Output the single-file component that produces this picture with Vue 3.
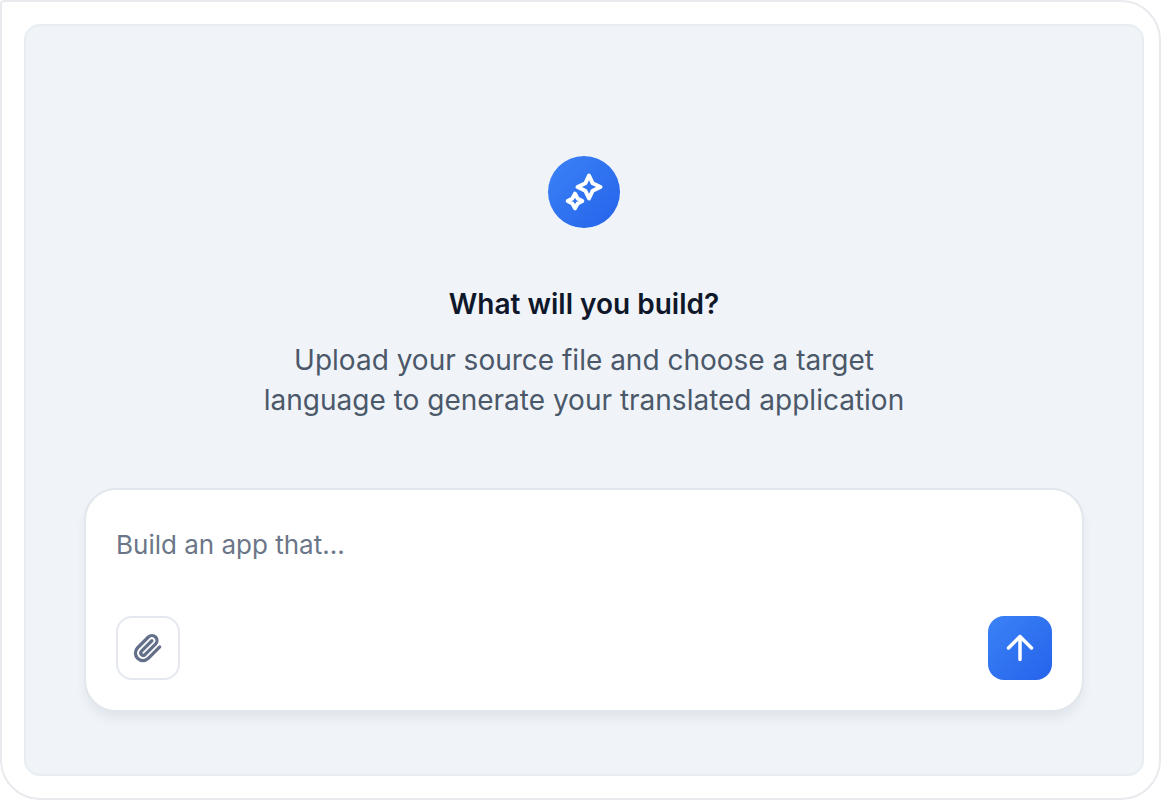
<script setup>
import { ref } from 'vue'

const prompt = ref('')
</script>

<template>
  <main class="frame">
    <section class="panel">
      <div class="badge">
        <svg viewBox="0 0 72 72" fill="none" stroke="currentColor" stroke-width="4" stroke-linejoin="round" aria-hidden="true">
          <path d="M41 19.5L44.7 27.3L52.5 31L44.7 34.7L41 42.5L37.3 34.7L29.5 31L37.3 27.3Z" />
          <path d="M27 37.7L29.6 42.4L34.3 45L29.6 47.6L27 52.3L24.4 47.6L19.7 45L24.4 42.4Z" />
        </svg>
      </div>
      <h1>What will you build?</h1>
      <p>Upload your source file and choose a target language to generate your translated application</p>
      <form class="composer" @submit.prevent>
        <textarea v-model="prompt" rows="1" aria-label="App description" placeholder="Build an app that..."></textarea>
        <div class="actions">
          <button class="attach" type="button" aria-label="Attach file">
            <svg viewBox="0 0 24 24" fill="none" stroke="currentColor" stroke-width="2.6" stroke-linecap="round" stroke-linejoin="round" aria-hidden="true">
              <path d="M21.4 11.1l-9.2 9.2a6 6 0 0 1-8.5-8.5l8.6-8.6a4 4 0 0 1 5.7 5.7l-8.6 8.6a2 2 0 0 1-2.8-2.8l8.5-8.5" />
            </svg>
          </button>
          <button class="send" type="submit" aria-label="Send">
            <svg viewBox="0 0 32 32" fill="none" stroke="currentColor" stroke-width="3.5" stroke-linecap="round" stroke-linejoin="round" aria-hidden="true">
              <path d="M16 27.5V4.5M4.5 16L16 4.5L27.5 16" />
            </svg>
          </button>
        </div>
      </form>
    </section>
  </main>
</template>

<style>
body {
  background: #fff;
}
</style>

<style scoped>
* {
  box-sizing: border-box;
}

.frame {
  display: flex;
  min-height: 100vh;
  padding: 22px 15px 22px 22px;
  border: 2px solid #e9eaee;
  border-radius: 4px 40px 40px 40px;
  background: #fff;
  font-family: Inter, "Liberation Sans", sans-serif;
}

.panel {
  flex: 1;
  display: flex;
  flex-direction: column;
  align-items: center;
  padding: 130px 58px 62px;
  border: 2px solid #e8edf1;
  border-radius: 16px;
  background: #f0f4f9;
}

.badge {
  width: 72px;
  height: 72px;
  border-radius: 50%;
  background: linear-gradient(135deg, #3b82f6, #2563eb);
  color: #fff;
}

.badge svg {
  display: block;
  width: 100%;
  height: 100%;
}

h1 {
  margin: 56px 0 16px;
  color: #0f172a;
  font-size: 28px;
  font-weight: 600;
  line-height: 40px;
}

p {
  max-width: 680px;
  margin: 0;
  color: #4b5869;
  font-size: 28px;
  line-height: 40px;
  text-align: center;
}

.composer {
  width: 100%;
  margin-top: 68px;
  padding: 30px;
  border: 2px solid #e2e6ed;
  border-radius: 32px;
  background: #fff;
  box-shadow: 0 8px 12px -2px rgb(15 23 42 / 7%);
}

textarea {
  display: block;
  width: 100%;
  height: 50px;
  padding: 0;
  border: 0;
  outline: 0;
  resize: none;
  background: transparent;
  color: #0f172a;
  font: 26px/50px Inter, "Liberation Sans", sans-serif;
}

textarea::placeholder {
  color: #6b7688;
  opacity: 1;
}

.actions {
  display: flex;
  justify-content: space-between;
  margin-top: 46px;
}

button {
  display: grid;
  place-items: center;
  width: 64px;
  height: 64px;
  padding: 0;
  border: 0;
  border-radius: 16px;
  cursor: pointer;
}

.attach {
  border: 2px solid #e5e8ee;
  background: #fff;
  color: #64708a;
}

.attach svg {
  width: 30px;
  height: 30px;
}

.send {
  background: linear-gradient(135deg, #3b82f6, #2563eb);
  color: #fff;
}

.send svg {
  width: 32px;
  height: 32px;
}
</style>
